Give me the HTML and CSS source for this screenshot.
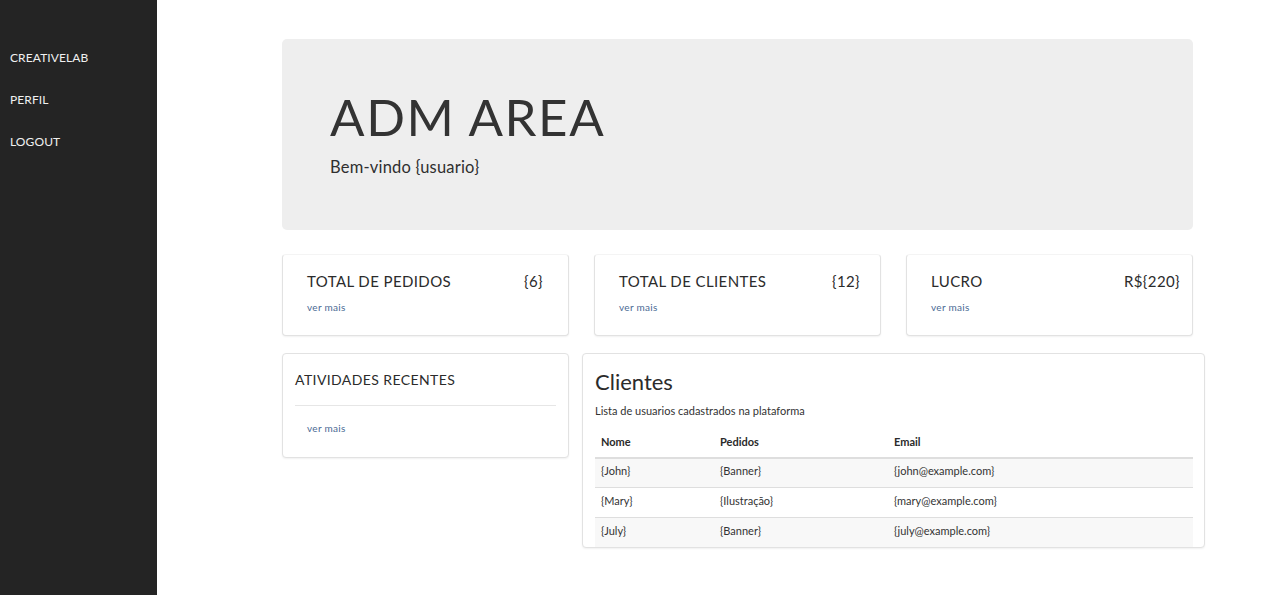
FILE: index.html
```html
<!DOCTYPE html>
<html lang="pt-BR">
<head>
<meta charset="utf-8">
<title>ADM AREA</title>
<link rel="stylesheet" href="styles.css">
</head>
<body>
<div class="layout">
  <nav class="sidebar">
    <a class="nav-link" href="#">CREATIVELAB</a>
    <a class="nav-link" href="#">PERFIL</a>
    <a class="nav-link" href="#">LOGOUT</a>
  </nav>
  <main class="main">
    <section class="jumbotron">
      <h1 class="display">ADM AREA</h1>
      <p class="lead">Bem-vindo {usuario}</p>
    </section>
    <section class="stats">
      <div class="card stat stat-a">
        <div class="stat-head"><span>TOTAL DE PEDIDOS</span><span>{6}</span></div>
        <a class="more" href="#">ver mais</a>
      </div>
      <div class="card stat stat-b">
        <div class="stat-head"><span>TOTAL DE CLIENTES</span><span>{12}</span></div>
        <a class="more" href="#">ver mais</a>
      </div>
      <div class="card stat stat-c">
        <div class="stat-head"><span>LUCRO</span><span>R${220}</span></div>
        <a class="more" href="#">ver mais</a>
      </div>
    </section>
    <section class="lower">
      <div class="card activity">
        <h2 class="activity-title">ATIVIDADES RECENTES</h2>
        <hr class="divider">
        <a class="more indent" href="#">ver mais</a>
      </div>
      <div class="card clients">
        <h2 class="clients-title">Clientes</h2>
        <p class="clients-sub">Lista de usuarios cadastrados na plataforma</p>
        <table class="table">
          <thead>
            <tr><th class="c1">Nome</th><th class="c2">Pedidos</th><th>Email</th></tr>
          </thead>
          <tbody>
            <tr><td>{John}</td><td>{Banner}</td><td>{john@example.com}</td></tr>
            <tr><td>{Mary}</td><td>{Ilustração}</td><td>{mary@example.com}</td></tr>
            <tr><td>{July}</td><td>{Banner}</td><td>{july@example.com}</td></tr>
          </tbody>
        </table>
      </div>
    </section>
  </main>
</div>
</body>
</html>
```

FILE: styles.css
```css
* { box-sizing: border-box; }
html, body { margin: 0; padding: 0; }
body {
  font-family: "Lato", "Noto Sans", "DejaVu Sans", sans-serif;
  color: #333;
  background: #fff;
  height: 595px;
  overflow: hidden;
}
.layout { display: flex; height: 595px; }
.sidebar {
  width: 157px;
  flex: none;
  background: #242424;
  display: flex;
  flex-direction: column;
  padding: 49px 0 0 10px;
  gap: 25px;
}
.nav-link {
  color: #f0f0f0;
  text-decoration: none;
  font-size: 12px;
  line-height: 17px;
  letter-spacing: 0.1px;
}
.main {
  flex: none;
  width: 1104px;
  padding: 39px 0 0 125px;
  display: flex;
  flex-direction: column;
}
.jumbotron {
  width: 911px;
  height: 191px;
  background: #eeeeee;
  border-radius: 5px;
  padding: 46px 48px 0;
}
.display {
  margin: 0;
  font-size: 51px;
  font-weight: 400;
  line-height: 64px;
  letter-spacing: 1.6px;
  color: #333;
}
.lead {
  margin: 7px 0 0;
  font-size: 16.5px;
  line-height: 22px;
  font-weight: 400;
  color: #2f2f2f;
  letter-spacing: 0.2px;
}
.card {
  background: #fff;
  border: 1px solid #e2e2e2;
  border-radius: 4px;
  box-shadow: 0 1px 2px rgba(0,0,0,0.06);
}
.stats {
  margin-top: 24px;
  display: flex;
  gap: 25px;
  width: 911px;
}
.stat {
  width: 287px;
  height: 82px;
  padding: 16px 25px 0 24px;
  border-top-color: #f4f4f4;
}
.stat-a { padding-right: 25px; }
.stat-b { padding-right: 20px; }
.stat-c { padding-right: 12px; }
.stat-head {
  display: flex;
  justify-content: space-between;
  font-size: 15px;
  line-height: 20px;
  color: #2b2b2b;
  letter-spacing: 0.4px;
}
.more {
  display: block;
  margin-top: 9px;
  font-size: 10px;
  line-height: 14px;
  color: #4a6a94;
  text-decoration: none;
  letter-spacing: 0.3px;
}
.lower {
  margin-top: 17px;
  display: flex;
  gap: 13px;
  align-items: flex-start;
}
.activity {
  width: 287px;
  height: 105px;
  padding: 16px 12px 0;
}
.activity-title {
  margin: 0;
  font-size: 14px;
  font-weight: 400;
  line-height: 20px;
  letter-spacing: 0.4px;
  color: #2b2b2b;
}
.divider {
  border: 0;
  border-top: 1px solid #e6e6e6;
  margin: 15px 0 15px;
}
.more.indent { margin: 0 0 0 12px; }
.clients {
  width: 623px;
  padding: 14px 12px 0;
}
.clients-title {
  margin: 0;
  font-size: 22px;
  font-weight: 400;
  line-height: 28px;
  color: #2b2b2b;
}
.clients-sub {
  margin: 7px 0 0;
  font-size: 11px;
  line-height: 15px;
  color: #333;
}
.table {
  width: 598px;
  border-collapse: collapse;
  margin-top: 9px;
  font-size: 11px;
}
.table th {
  text-align: left;
  font-weight: 700;
  padding: 7px 6px 8px;
  line-height: 15px;
  border-bottom: 2px solid #dedede;
  color: #2b2b2b;
}
.table .c1 { width: 119px; }
.table .c2 { width: 174px; }
.table td {
  padding: 0 6px 4px;
  height: 30px;
  line-height: 15px;
  border-top: 1px solid #dedede;
  color: #333;
}
.table tbody tr:first-child td { border-top: 0; height: 29px; }
.table tbody tr:nth-child(odd) { background: #f8f8f8; }
```
